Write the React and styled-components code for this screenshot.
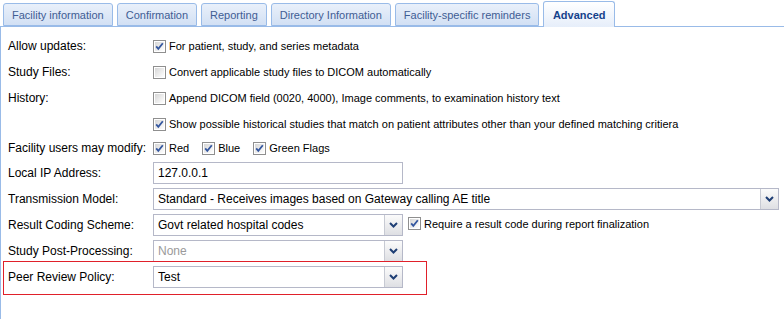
import React from 'react';
import styled, { createGlobalStyle } from 'styled-components';

const Global = createGlobalStyle`
  html, body { margin: 0; padding: 0; background: #fff; }
  body {
    font-family: "Liberation Sans", Arial, sans-serif;
    font-size: 12px;
    color: #000;
    width: 784px;
    height: 319px;
    overflow: hidden;
  }
`;

const Page = styled.div`
  width: 784px;
  height: 319px;
  display: flex;
  flex-direction: column;
`;

const TabStrip = styled.div`
  display: flex;
  align-items: flex-end;
  gap: 4px;
  padding-left: 3px;
  height: 27px;
  box-sizing: border-box;
  border-bottom: 1px solid #99bbe8;
`;

const Tab = styled.div`
  box-sizing: border-box;
  height: ${p => (p.$active ? '26px' : '23px')};
  margin-bottom: ${p => (p.$active ? '-1px' : '0')};
  padding: 0 ${p => (p.$active ? '8.5px' : '8px')};
  display: flex;
  align-items: center;
  border: 1px solid #99bbe8;
  border-bottom: ${p => (p.$active ? 'none' : '1px solid #99bbe8')};
  border-radius: 3px 3px 0 0;
  background: ${p =>
    p.$active
      ? 'linear-gradient(#ffffff, #e6eefa)'
      : 'linear-gradient(#e9f0fa, #d2e0f4)'};
  color: ${p => (p.$active ? '#15428b' : '#3f5d94')};
  font-weight: ${p => (p.$active ? 'bold' : 'normal')};
  font-size: 11px;
  white-space: nowrap;
`;

const Body = styled.div`
  flex: 1;
  border-left: 1px solid #99bbe8;
  padding: 6px 0 0 7px;
  display: flex;
  flex-direction: column;
`;

const CheckRow = styled.div`
  display: flex;
  align-items: center;
  height: ${p => p.$h || 26}px;
`;

const Label = styled.div`
  width: 145px;
  flex: none;
  white-space: nowrap;
`;

const Options = styled.div`
  display: flex;
  align-items: center;
  gap: 13px;
`;

const Option = styled.label`
  display: inline-flex;
  align-items: center;
  gap: 3px;
  font-size: 11px;
  white-space: nowrap;
`;

const Fields = styled.div`
  display: flex;
  flex-direction: column;
  gap: 4px;
  margin-top: 3px;
`;

const FieldRow = styled.div`
  display: flex;
  align-items: center;
  height: 22px;
`;

const Highlight = styled.div`
  box-sizing: border-box;
  width: 424px;
  margin: -5px 0 0 -5px;
  padding: 4px 0 6px 4px;
  border: 1px solid #e0202a;
`;

const TextBox = styled.div`
  box-sizing: border-box;
  width: ${p => p.$w}px;
  height: 22px;
  border: 1px solid #b5b8c8;
  background: #fff;
  display: flex;
  align-items: center;
  padding-left: 4px;
  flex: none;
`;

const SelectBox = styled.div`
  box-sizing: border-box;
  width: ${p => p.$w}px;
  height: 22px;
  border: 1px solid #b5b8c8;
  background: #fff;
  display: flex;
  align-items: stretch;
  flex: none;
`;

const SelectValue = styled.div`
  flex: 1;
  display: flex;
  align-items: center;
  padding-left: 4px;
  color: ${p => (p.$disabled ? '#9a9a9a' : '#000')};
  white-space: nowrap;
  overflow: hidden;
`;

const ArrowBtn = styled.div`
  width: 17px;
  flex: none;
  border-left: 1px solid #c7cad3;
  background: linear-gradient(#fbfbfb, #dedfe3);
  display: flex;
  align-items: center;
  justify-content: center;
`;

const After = styled.div`
  margin-left: 5px;
`;

const Check = ({ checked }) => (
  <svg width="13" height="13" viewBox="0 0 13 13">
    <defs>
      <linearGradient id="cbg" x1="0" y1="0" x2="1" y2="1">
        <stop offset="0" stopColor="#d6d6d6" />
        <stop offset="1" stopColor="#ffffff" />
      </linearGradient>
    </defs>
    <rect x="0.5" y="0.5" width="12" height="12" fill="#fff" stroke="#8f8f8f" />
    <rect x="2" y="2" width="9" height="9" fill="url(#cbg)" />
    {checked && (
      <path d="M3.2 6.4 L5.3 8.8 L9.8 3.2" fill="none" stroke="#34579f" strokeWidth="1.8" />
    )}
  </svg>
);

const Chevron = () => (
  <svg width="9" height="6" viewBox="0 0 9 6">
    <path d="M1 1 L4.5 4.5 L8 1" fill="none" stroke="#1f3f75" strokeWidth="2" />
  </svg>
);

const Select = ({ w, value, disabled }) => (
  <SelectBox $w={w}>
    <SelectValue $disabled={disabled}>{value}</SelectValue>
    <ArrowBtn>
      <Chevron />
    </ArrowBtn>
  </SelectBox>
);

const tabs = [
  'Facility information',
  'Confirmation',
  'Reporting',
  'Directory Information',
  'Facility-specific reminders',
  'Advanced',
];

export default function App() {
  return (
    <Page>
      <Global />
      <TabStrip>
        {tabs.map(t => (
          <Tab key={t} $active={t === 'Advanced'}>
            {t}
          </Tab>
        ))}
      </TabStrip>
      <Body>
        <CheckRow>
          <Label>Allow updates:</Label>
          <Option>
            <Check checked />
            For patient, study, and series metadata
          </Option>
        </CheckRow>
        <CheckRow>
          <Label>Study Files:</Label>
          <Option>
            <Check />
            Convert applicable study files to DICOM automatically
          </Option>
        </CheckRow>
        <CheckRow>
          <Label>History:</Label>
          <Option>
            <Check />
            Append DICOM field (0020, 4000), Image comments, to examination history text
          </Option>
        </CheckRow>
        <CheckRow>
          <Label />
          <Option>
            <Check checked />
            Show possible historical studies that match on patient attributes other than your defined matching critiera
          </Option>
        </CheckRow>
        <CheckRow $h={22}>
          <Label>Facility users may modify:</Label>
          <Options>
            <Option>
              <Check checked />
              Red
            </Option>
            <Option>
              <Check checked />
              Blue
            </Option>
            <Option>
              <Check checked />
              Green Flags
            </Option>
          </Options>
        </CheckRow>
        <Fields>
          <FieldRow>
            <Label>Local IP Address:</Label>
            <TextBox $w={250}>127.0.0.1</TextBox>
          </FieldRow>
          <FieldRow>
            <Label>Transmission Model:</Label>
            <Select w={626} value="Standard - Receives images based on Gateway calling AE title" />
          </FieldRow>
          <FieldRow>
            <Label>Result Coding Scheme:</Label>
            <Select w={250} value="Govt related hospital codes" />
            <After>
              <Option>
                <Check checked />
                Require a result code during report finalization
              </Option>
            </After>
          </FieldRow>
          <FieldRow>
            <Label>Study Post-Processing:</Label>
            <Select w={250} value="None" disabled />
          </FieldRow>
          <Highlight>
            <FieldRow>
              <Label>Peer Review Policy:</Label>
              <Select w={250} value="Test" />
            </FieldRow>
          </Highlight>
        </Fields>
      </Body>
    </Page>
  );
}
